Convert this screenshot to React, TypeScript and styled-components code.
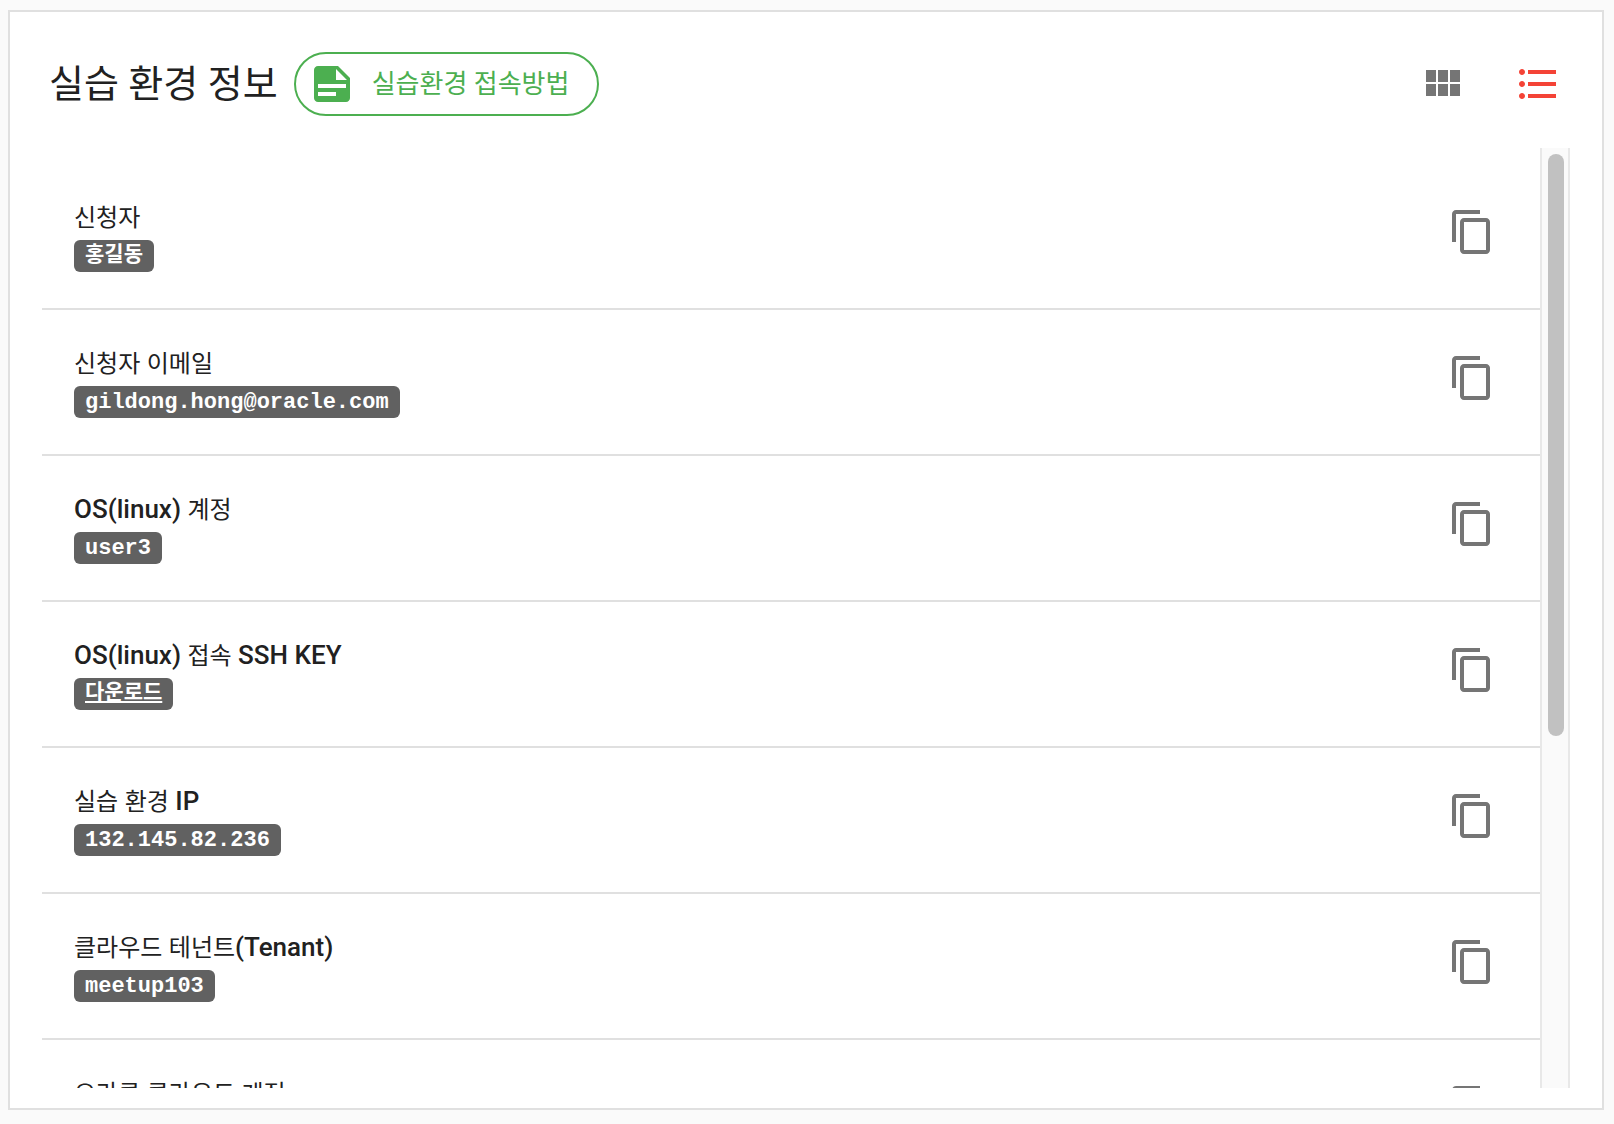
import React from "react";
import styled, { createGlobalStyle } from "styled-components";

const GlobalStyle = createGlobalStyle`
  *, *::before, *::after { box-sizing: border-box; }
  body {
    margin: 0;
    background: #fafafa;
    color: #212121;
    font-family: Roboto, "Noto Sans CJK KR", sans-serif;
  }
`;

const Page = styled.main`
  display: flex;
  height: 100vh;
  padding: 10px 10px 14px 8px;
`;

const Card = styled.section`
  display: flex;
  flex: 1;
  flex-direction: column;
  min-width: 0;
  padding-bottom: 20px;
  background: #fff;
  border: 2px solid #e0e0e0;
`;

const Header = styled.header`
  display: flex;
  align-items: center;
  justify-content: space-between;
  padding: 36px 28px 28px 39px;
`;

const Group = styled.div<{ $gap: number }>`
  display: flex;
  align-items: center;
  gap: ${(p) => p.$gap}px;
`;

const Title = styled.h1`
  margin: 0;
  font-size: 38px;
  font-weight: 400;
  line-height: 64px;
`;

const GuideButton = styled.button`
  display: flex;
  align-items: center;
  gap: 16px;
  height: 64px;
  padding: 0 28px 0 12px;
  color: #4caf50;
  background: transparent;
  border: 2px solid currentColor;
  border-radius: 32px;
  font-family: inherit;
  font-size: 26px;
  line-height: 32px;
  cursor: pointer;
`;

const IconButton = styled.button<{ $size: number; $active?: boolean }>`
  display: flex;
  flex: none;
  align-items: center;
  justify-content: center;
  width: ${(p) => p.$size}px;
  height: ${(p) => p.$size}px;
  padding: 0;
  color: ${(p) => (p.$active ? "#f44336" : "#757575")};
  background: none;
  border: 0;
  cursor: pointer;
`;

const Icon = styled.svg`
  display: block;
  flex: none;
  width: 48px;
  height: 48px;
  fill: currentColor;
`;

const ScrollArea = styled.div`
  display: flex;
  flex: 1;
  min-height: 0;
  padding: 0 32px;
`;

const List = styled.ul`
  flex: 1;
  min-width: 0;
  margin: 0;
  padding: 16px 0;
  overflow: hidden;
  list-style: none;
`;

const Row = styled.li`
  display: flex;
  align-items: flex-start;
  justify-content: space-between;
  height: 146px;
  padding: 36px 36px 0 32px;
  border-bottom: 2px solid #e0e0e0;
`;

const Field = styled.div`
  display: flex;
  flex-direction: column;
  align-items: flex-start;
  gap: 6px;
`;

const Label = styled.span`
  font-size: 26px;
  font-weight: 500;
  line-height: 34px;
  white-space: pre;
`;

const Hangul = styled.span`
  font-size: 24px;
  font-weight: 400;
  line-height: 24px;
`;

const Chip = styled.code<{ $hangul: boolean }>`
  height: 32px;
  padding: 0 11px;
  color: #fff;
  background: #616161;
  border-radius: 6px;
  font-family: "Liberation Mono", "Noto Sans CJK KR", monospace;
  font-size: ${(p) => (p.$hangul ? 21 : 22)}px;
  font-weight: 700;
  line-height: ${(p) => (p.$hangul ? 32 : 34)}px;
`;

const ChipLink = styled.a`
  color: inherit;
`;

const Track = styled.div`
  flex: none;
  width: 30px;
  padding: 6px;
  background: #fafafa;
  border: solid #e8e8e8;
  border-width: 0 2px;
`;

const Thumb = styled.div<{ $ratio: number }>`
  width: 16px;
  height: ${(p) => p.$ratio * 100}%;
  background: #c1c1c1;
  border-radius: 8px;
`;

const paths = {
  document:
    "M5 3c-1.110 0-2 .89-2 2v14c0 1.110.89 2 2 2h14c1.110 0 2-.89 2-2V9l-6-6H5z",
  grid: "M4 11h5V5H4v6zm0 7h5v-6H4v6zm6 0h5v-6h-5v6zm6 0h5v-6h-5v6zm-6-7h5V5h-5v6zm6-6v6h5V5h-5z",
  list: "M4 10.500c-.83 0-1.500.67-1.500 1.500s.67 1.500 1.500 1.500 1.500-.67 1.500-1.500-.67-1.500-1.500-1.500zm0-6c-.83 0-1.500.67-1.500 1.500S3.170 7.500 4 7.500 5.500 6.830 5.500 6 4.830 4.500 4 4.500zm0 12c-.83 0-1.500.68-1.500 1.500s.68 1.500 1.500 1.500 1.500-.68 1.500-1.500-.67-1.500-1.500-1.500zM7 19h14v-2H7v2zm0-6h14v-2H7v2zm0-8v2h14V5H7z",
  copy: "M16 1H4c-1.100 0-2 .9-2 2v14h2V3h12V1zm3 4H8c-1.100 0-2 .9-2 2v14c0 1.100.9 2 2 2h11c1.100 0 2-.9 2-2V7c0-1.100-.9-2-2-2zm0 16H8V7h11v14z",
};

const Glyph = ({ name }: { name: keyof typeof paths }) => (
  <Icon viewBox="0 0 24 24" aria-hidden="true">
    <path d={paths[name]} />
    {name === "document" && (
      <path fill="#fff" d="M14 4.500V10h5.500zM5 12h14v2H5zM5 16h9v2H5z" />
    )}
  </Icon>
);

const fields = [
  { label: "신청자", value: "홍길동" },
  { label: "신청자 이메일", value: "gildong.hong@oracle.com" },
  { label: "OS(linux) 계정", value: "user3" },
  { label: "OS(linux) 접속 SSH KEY", value: "다운로드", link: true },
  { label: "실습 환경 IP", value: "132.145.82.236" },
  { label: "클라우드 테넌트(Tenant)", value: "meetup103" },
  { label: "오라클 클라우드 계정", value: "meetup103" },
];

// Hangul is set one step smaller and lighter than the Latin beside it.
const renderLabel = (text: string) =>
  text
    .split(/([가-힣]+)/)
    .filter(Boolean)
    .map((part, i) => (/[가-힣]/.test(part) ? <Hangul key={i}>{part}</Hangul> : part));

export default function App() {
  return (
    <>
      <GlobalStyle />
      <Page>
        <Card>
          <Header>
            <Group $gap={16}>
              <Title>실습 환경 정보</Title>
              <GuideButton type="button">
                <Glyph name="document" />
                실습환경 접속방법
              </GuideButton>
            </Group>
            <Group $gap={24}>
              <IconButton type="button" $size={72} aria-label="카드 보기">
                <Glyph name="grid" />
              </IconButton>
              <IconButton type="button" $size={72} $active aria-label="목록 보기">
                <Glyph name="list" />
              </IconButton>
            </Group>
          </Header>
          <ScrollArea>
            <List>
              {fields.map(({ label, value, link }) => (
                <Row key={label}>
                  <Field>
                    <Label>{renderLabel(label)}</Label>
                    <Chip $hangul={/[가-힣]/.test(value)}>
                      {link ? <ChipLink href="#download">{value}</ChipLink> : value}
                    </Chip>
                  </Field>
                  <IconButton type="button" $size={64} aria-label={`${label} 복사`}>
                    <Glyph name="copy" />
                  </IconButton>
                </Row>
              ))}
            </List>
            <Track aria-hidden="true">
              <Thumb $ratio={0.627} />
            </Track>
          </ScrollArea>
        </Card>
      </Page>
    </>
  );
}
